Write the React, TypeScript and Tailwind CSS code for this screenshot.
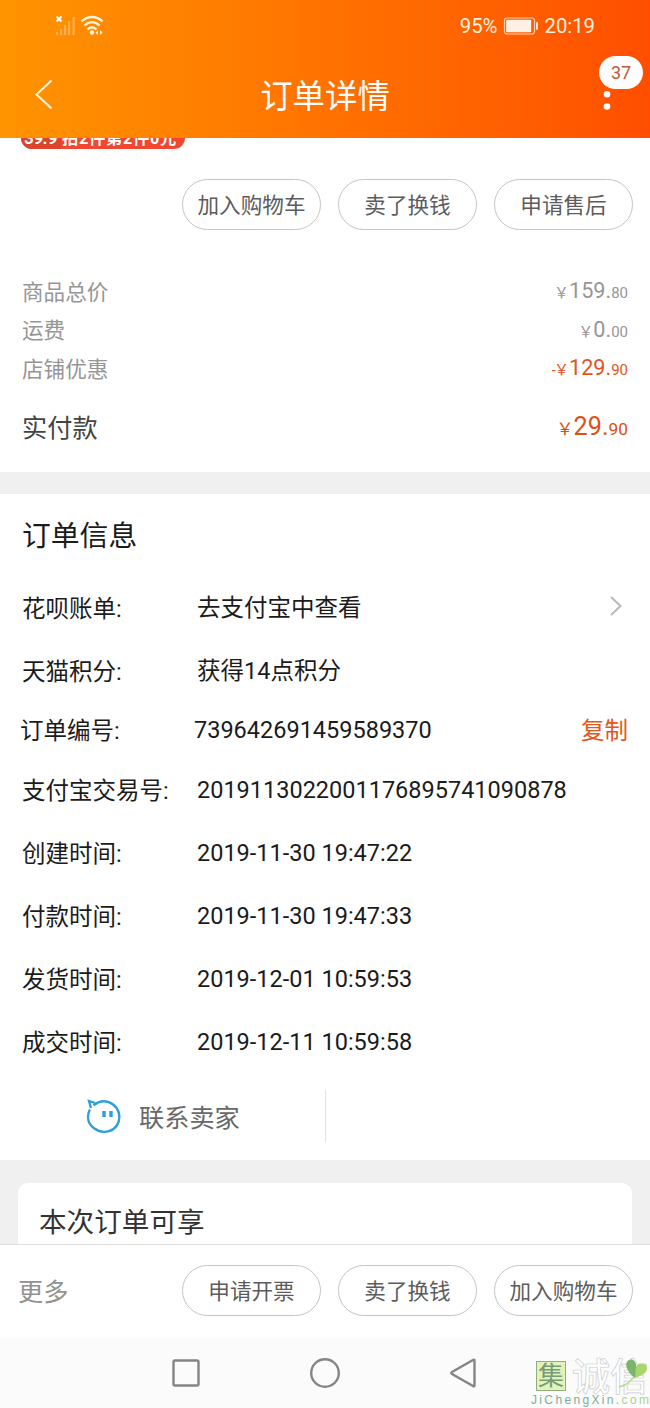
import React from "react";

function Pill({ children }: { children: React.ReactNode }) {
  return (
    <button className="flex h-[51px] w-[139px] items-center justify-center rounded-full border border-[#c4c4c4] bg-white pt-[3px] text-[21.6px] leading-none whitespace-nowrap text-[#5c5c5c]">
      {children}
    </button>
  );
}

type PriceProps = { sign?: string; whole: string; cents: string; large?: boolean };

function Price({ sign = "", whole, cents, large = false }: PriceProps) {
  const small = large ? "text-[17.3px]" : "text-[15px]";
  return (
    <span className="flex items-baseline leading-none">
      {sign && <span className={small + " -mr-[2px]"}>{sign}</span>}
      <span className={small}>￥</span>
      <span className={large ? "text-[25.2px]" : "text-[21.6px]"}>{whole}.</span>
      <span className={small}>{cents}</span>
    </span>
  );
}

function Header() {
  return (
    <header className="h-[138px] bg-linear-to-r from-[#ff9400] via-[#ff7200] to-[#ff4e00]">
      <div className="flex h-[50px] items-center justify-between pr-[55px] pl-[55px] text-[#fff0dc]">
        <svg width="49" height="22" viewBox="0 0 49 22" fill="none" className="-mt-px">
          <path d="M1.5 2.5l5 5M6.5 2.5l-5 5" stroke="#fff" strokeWidth="2" />
          <g fill="#ffb04c">
            <rect x="1" y="18" width="2.2" height="3" />
            <rect x="5" y="15" width="2.2" height="6" />
            <rect x="9" y="11" width="2.2" height="10" />
            <rect x="13" y="7" width="2.2" height="14" />
            <rect x="17.5" y="3" width="2.2" height="18" />
          </g>
          <g stroke="#fff3dc" strokeWidth="2.3">
            <path d="M26.5 7.5c6-6 15-6 21 0" />
            <path d="M29.5 11.5c4.5-4.5 10.5-4.5 15 0" />
            <path d="M32.5 15.5c2.8-2.7 6.2-2.7 9 0" />
          </g>
          <circle cx="37" cy="18.5" r="2.2" fill="#fff3dc" />
          <path d="M43 16v5l-2.5-2.5zM45 16v5l2.5-2.5z" fill="#fff3dc" />
        </svg>
        <div className="flex items-center pt-[3px] text-[20.3px] leading-none">
          <span>95%</span>
          <svg width="36" height="18" viewBox="0 0 36 18" fill="none" className="mr-[5px] ml-[6px] -mt-px">
            <rect x="1.5" y="1" width="30" height="16" rx="2.5" stroke="#ffd0b0" strokeWidth="1.2" />
            <rect x="3.2" y="2.7" width="25" height="12.6" rx="1" fill="#fff0e6" />
            <rect x="33" y="5" width="2" height="8" rx="1" fill="#ffe3d0" />
          </svg>
          <span>20:19</span>
        </div>
      </div>
      <div className="relative flex h-[88px] items-center justify-center text-white">
        <svg width="20" height="32" viewBox="0 0 20 32" fill="none" className="absolute top-[29px] left-[34px]">
          <path d="M17.5 1.5L2.5 15.5L17.5 29.5" stroke="#fff4e2" strokeWidth="2" />
        </svg>
        <h1 className="pt-[7px] text-[32.4px] leading-none">订单详情</h1>
        <svg width="8" height="22" viewBox="0 0 8 22" className="absolute top-[40px] left-[603px]" fill="#fff">
          <circle cx="4" cy="4.3" r="3.3" />
          <circle cx="4" cy="16.5" r="3.3" />
        </svg>
        <span className="absolute top-[6px] left-[599px] flex h-[33px] w-[44px] items-center justify-center rounded-full bg-white pt-px text-[18px] leading-none text-[#c25a34]">
          37
        </span>
      </div>
    </header>
  );
}

const info = [
  { label: "花呗账单:", value: "去支付宝中查看", box: "h-[63px] pt-[2px]", arrow: true },
  { label: "天猫积分:", value: "获得14点积分", box: "h-[63px] pt-[2px]" },
  { label: "订单编号:", value: "739642691459589370", box: "h-[58px] -ml-[2px]", copy: true },
  { label: "支付宝交易号:", value: "2019113022001176895741090878", box: "h-[61px]" },
  { label: "创建时间:", value: "2019-11-30 19:47:22", box: "h-[64px] pt-px" },
  { label: "付款时间:", value: "2019-11-30 19:47:33", box: "h-[63px]" },
  { label: "发货时间:", value: "2019-12-01 10:59:53", box: "h-[63px]" },
  { label: "成交时间:", value: "2019-12-11 10:59:58", box: "h-[63px]" },
];

function Watermark() {
  return (
    <div className="absolute top-[19px] left-[530px] flex w-[120px] flex-col">
      <div className="flex h-[37px] items-center">
        <span className="ml-[6px] flex h-[30px] w-[30px] items-center justify-center border-[1.5px] border-[#93ac80] bg-[#e2f3ba] text-[26px] leading-none text-[#779c79]">
          集
        </span>
        <span className="ml-[6px] pt-[2px] text-[38px] leading-none font-medium whitespace-nowrap text-white [-webkit-text-stroke:0.7px_#cccccc]">
          诚信
        </span>
      </div>
      <span className="pl-px font-['Liberation_Sans'] text-[12px] leading-[12px] tracking-[2.35px] whitespace-nowrap text-[#80ae92]">
        JiChengXin.<span className="text-[#b0d08d]">com</span>
      </span>
      <svg width="32" height="32" viewBox="0 0 32 32" className="absolute top-[1px] left-[88px]" fill="none">
        <path d="M1 29Q13 26 17 16" stroke="#b9d98a" strokeWidth="1.5" />
        <path d="M17 20C8 13 6 5 11 2C15 0 18 4 18 8C22 4 29 5 29 10C29 16 22 18 17 20Z" fill="#a9d66a" />
        <path d="M17 20C8 13 6 5 11 2C15 0 18 4 18 8Z" fill="#79b56d" />
      </svg>
    </div>
  );
}

export default function App() {
  return (
    <div className="flex h-[1408px] w-[650px] flex-col overflow-hidden bg-white font-[Roboto,'Noto_Sans_CJK_SC',sans-serif] text-[#1b1b1b]">
      <Header />
      <section className="h-[334px] shrink-0">
        <div className="flex h-[41px] items-start pl-[21px]">
          <div className="flex h-[11px] w-[164px] items-end overflow-hidden rounded-b-[11px] bg-[#f1462f] text-[16.3px] leading-none font-bold whitespace-nowrap text-white">
            <span className="flex h-[21px] w-[40px] shrink-0 items-center justify-center bg-[#dc442c] text-[17px] italic">39.9</span>
            <span className="flex h-[19px] items-center pl-px tracking-[0.7px]">拍2件第2件0元</span>
          </div>
        </div>
        <div className="flex justify-end gap-[17px] pr-[17px]">
          <Pill>加入购物车</Pill>
          <Pill>卖了换钱</Pill>
          <Pill>申请售后</Pill>
        </div>
        <div className="mt-[42px] px-[22px] text-[21.6px] leading-none text-[#969696]">
          <div className="flex h-[38px] items-center justify-between">
            <span className="pt-[3px]">商品总价</span>
            <Price whole="159" cents="80" />
          </div>
          <div className="flex h-[39px] items-center justify-between">
            <span className="pt-[2px]">运费</span>
            <Price whole="0" cents="00" />
          </div>
          <div className="flex h-[38px] items-center justify-between">
            <span className="pt-[3px]">店铺优惠</span>
            <span className="text-[#df5520]"><Price sign="-" whole="129" cents="90" /></span>
          </div>
        </div>
        <div className="flex h-[80px] items-center justify-between px-[22px] text-[25.2px] leading-none text-[#444]">
          <span className="pt-[4px]">实付款</span>
          <span className="text-[#df5010]"><Price whole="29" cents="90" large /></span>
        </div>
      </section>
      <div className="h-[22px] shrink-0 bg-[#f0f0f0]" />
      <section className="h-[666px] shrink-0">
        <h2 className="flex h-[82px] items-center pt-[3px] pl-[22px] text-[28.8px] leading-none">订单信息</h2>
        {info.map((row) => (
          <div key={row.label} className={"flex items-center pl-[22px] text-[23.5px] leading-none " + row.box}>
            <span className="w-[175px] shrink-0 pt-[2px] whitespace-nowrap">{row.label}</span>
            <span className={row.copy ? "-ml-px whitespace-nowrap" : "whitespace-nowrap"}>{row.value}</span>
            {row.arrow && (
              <svg width="14" height="22" viewBox="0 0 14 22" fill="none" className="mr-[27px] ml-auto -mt-[5px]">
                <path d="M2 2L11.5 11L2 20" stroke="#b8b8b8" strokeWidth="2" />
              </svg>
            )}
            {row.copy && <button className="mr-[22px] ml-auto pt-[2px] text-[#e35617]">复制</button>}
          </div>
        ))}
        <div className="flex h-[84px] w-[326px] items-center">
          <div className="flex h-[52px] flex-1 items-center border-r border-[#e2e2e2] pl-[86px]">
            <svg width="36" height="36" viewBox="0 0 36 36" fill="none" stroke="#2d9fd7" strokeWidth="2.3">
              <path d="M7.5 7.5C12 3.400 17 2.500 22 3.800C37 8.500 37 29 23 33.200C12 36 2 28 2 19C2 16.500 2.500 13.500 4 11.500" />
              <path d="M5 10L3 3L9 5" />
              <path d="M18 13v6M25 13v6" strokeWidth="3.4" />
            </svg>
            <span className="ml-[17px] pt-[5px] text-[25.2px] leading-none text-[#686868]">联系卖家</span>
          </div>
        </div>
      </section>
      <section className="h-[84px] shrink-0 overflow-hidden bg-[#f0f0f0] px-[18px] pt-[23px]">
        <div className="flex h-[80px] rounded-t-[10px] bg-white pt-[26px] pl-[21px] text-[27.6px] leading-none text-[#333]">本次订单可享</div>
      </section>
      <section className="flex h-[94px] shrink-0 items-center justify-between border-t border-[#dedede] bg-white pr-[17px] pb-[2px] pl-[18px]">
        <span className="pt-[4px] text-[25.2px] leading-none text-[#929292]">更多</span>
        <div className="flex gap-[17px]">
          <Pill>申请开票</Pill>
          <Pill>卖了换钱</Pill>
          <Pill>加入购物车</Pill>
        </div>
      </section>
      <nav className="relative flex h-[70px] shrink-0 bg-[#fbfbfb] pt-[18px] pl-[171px]">
        <svg width="306" height="34" viewBox="0 0 306 34" fill="none" stroke="#858585" strokeWidth="2.4">
          <rect x="2.5" y="4.5" width="25" height="25" rx="1.5" />
          <circle cx="154" cy="17" r="13.8" />
          <path d="M303.5 4.5V29.5Q303.500 31 302 30L281 18Q279.500 17 281 16L302 4Q303.500 3 303.500 4.500Z" />
        </svg>
        <Watermark />
      </nav>
    </div>
  );
}
